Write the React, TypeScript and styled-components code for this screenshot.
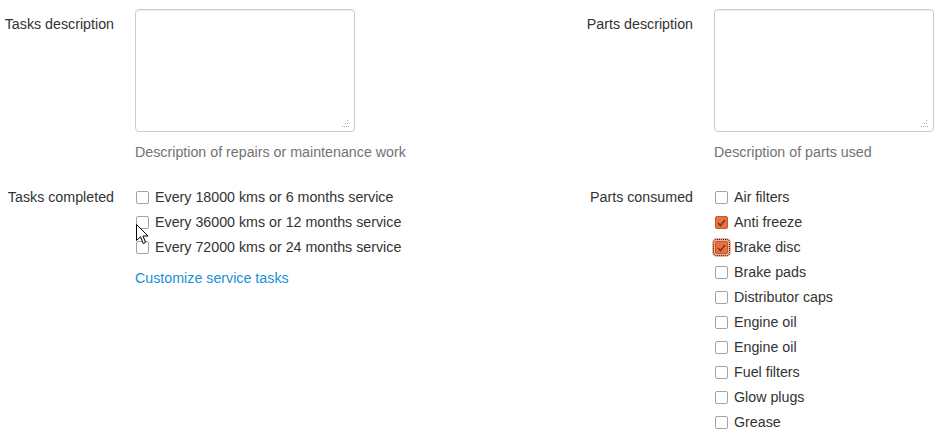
import React from "react";
import styled, { createGlobalStyle } from "styled-components";

const Global = createGlobalStyle`
  html, body { margin: 0; padding: 0; background: #fff; }
  body { font-family: "Liberation Sans", Arial, Helvetica, sans-serif; font-size: 14.25px; color: #333; }
`;

const Page = styled.div`
  position: relative;
  display: grid;
  grid-template-columns: 579px 1fr;
  row-gap: 20px;
  padding-top: 9px;
  width: 940px;
  height: 438px;
  overflow: hidden;
  box-sizing: border-box;
`;

const Group = styled.div`
  display: flex;
  align-items: flex-start;
`;

const Label = styled.div<{ $pad: number }>`
  width: 114px;
  text-align: right;
  padding-top: ${(p) => p.$pad}px;
  line-height: 20px;
  flex-shrink: 0;
  white-space: nowrap;
`;

const Control = styled.div`
  margin-left: 21px;
  display: flex;
  flex-direction: column;
`;

const AreaWrap = styled.div`
  position: relative;
  width: 220px;
  height: 123px;
`;

const Area = styled.textarea`
  width: 220px;
  height: 123px;
  box-sizing: border-box;
  border: 1px solid #ccc;
  border-radius: 4px;
  box-shadow: inset 0 1px 1px rgba(0, 0, 0, 0.075);
  resize: none;
  margin: 0;
  font-family: inherit;
  outline: none;
`;

const Grip = styled.svg`
  position: absolute;
  right: 6px;
  bottom: 4px;
`;

const Help = styled.div`
  margin-top: 10px;
  line-height: 20px;
  color: #737373;
`;

const List = styled.div`
  display: flex;
  flex-direction: column;
`;

const Row = styled.label`
  display: flex;
  align-items: center;
  height: 25px;
  line-height: 25px;
  white-space: nowrap;
`;

const Box = styled.span<{ $checked?: boolean; $focus?: boolean }>`
  width: 13px;
  height: 13px;
  box-sizing: border-box;
  margin-left: 1px;
  margin-right: 6px;
  border-radius: 2px;
  border: 1px solid ${(p) => (p.$checked ? "#c2582f" : "#a3a3a3")};
  background: ${(p) => (p.$checked ? "#e8713f" : "#fff")};
  display: inline-flex;
  align-items: center;
  justify-content: center;
  flex-shrink: 0;
  outline: ${(p) => (p.$focus ? "1px dotted #222" : "none")};
  outline-offset: 1px;
  box-shadow: ${(p) => (p.$focus ? "0 0 0 3px #f3b08e" : "none")};
`;

const Link = styled.a`
  color: #1a8fd4;
  text-decoration: none;
  line-height: 25px;
  margin-top: 6px;
`;

const Cursor = styled.svg`
  position: absolute;
  left: 136px;
  top: 224px;
`;

function Check({ label, checked, focus }: { label: string; checked?: boolean; focus?: boolean }) {
  return (
    <Row>
      <Box $checked={checked} $focus={focus}>
        {checked && (
          <svg width="9" height="8" viewBox="0 0 9 8">
            <path d="M1 4 L3.5 6.5 L8 1" fill="none" stroke="#7a3620" strokeWidth="1.6" />
          </svg>
        )}
      </Box>
      {label}
    </Row>
  );
}

function TextArea() {
  return (
    <AreaWrap>
      <Area />
      <Grip width="8" height="8" viewBox="0 0 8 8">
        <g fill="#aaa">
          <rect x="6" y="0" width="1" height="1" />
          <rect x="4" y="3" width="1" height="1" />
          <rect x="6" y="3" width="1" height="1" />
          <rect x="1" y="6" width="1" height="1" />
          <rect x="3" y="6" width="1" height="1" />
          <rect x="5" y="6" width="1" height="1" />
          <rect x="7" y="6" width="1" height="1" />
        </g>
      </Grip>
    </AreaWrap>
  );
}

const parts = [
  "Air filters",
  "Anti freeze",
  "Brake disc",
  "Brake pads",
  "Distributor caps",
  "Engine oil",
  "Engine oil",
  "Fuel filters",
  "Glow plugs",
  "Grease",
];

export default function App() {
  return (
    <>
      <Global />
      <Page>
        <Group>
          <Label $pad={5}>Tasks description</Label>
          <Control>
            <TextArea />
            <Help>Description of repairs or maintenance work</Help>
          </Control>
        </Group>
        <Group>
          <Label $pad={5}>Parts description</Label>
          <Control>
            <TextArea />
            <Help>Description of parts used</Help>
          </Control>
        </Group>
        <Group>
          <Label $pad={2}>Tasks completed</Label>
          <Control>
            <List>
              <Check label="Every 18000 kms or 6 months service" />
              <Check label="Every 36000 kms or 12 months service" />
              <Check label="Every 72000 kms or 24 months service" />
            </List>
            <Link href="#">Customize service tasks</Link>
          </Control>
        </Group>
        <Group>
          <Label $pad={2}>Parts consumed</Label>
          <Control>
            <List>
              {parts.map((p, i) => (
                <Check key={i} label={p} checked={i === 1 || i === 2} focus={i === 2} />
              ))}
            </List>
          </Control>
        </Group>
        <Cursor width="13" height="21" viewBox="0 0 13 21">
          <path d="M0.5 0.5 L0.5 16.5 L4.5 12.8 L7.2 19.5 L9.6 18.5 L7 12 L12 12 Z" fill="#fff" stroke="#000" strokeWidth="1" />
        </Cursor>
      </Page>
    </>
  );
}
